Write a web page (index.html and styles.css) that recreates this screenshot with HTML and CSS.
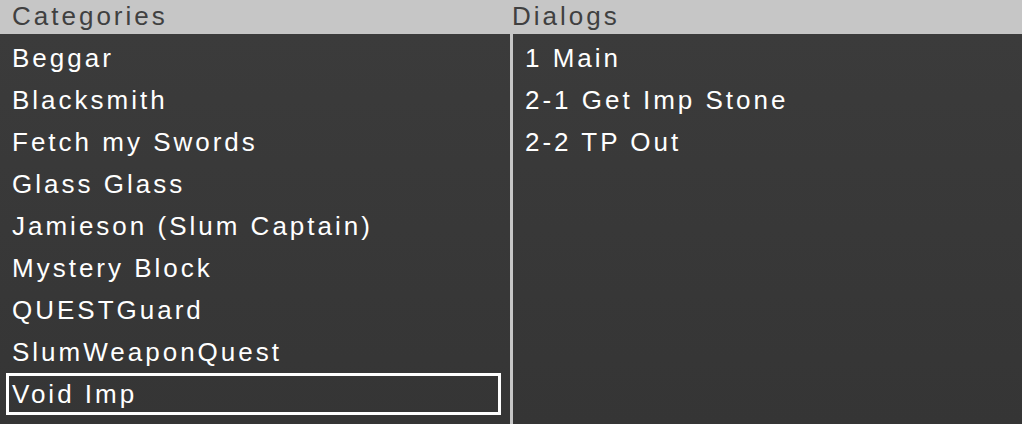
FILE: index.html
```html
<!DOCTYPE html>
<html>
<head>
<meta charset="utf-8">
<link rel="stylesheet" href="styles.css">
</head>
<body>
<div class="screen">
  <div class="header">
    <div class="hcell hcell-left">Categories</div>
    <div class="hcell hcell-right">Dialogs</div>
  </div>
  <div class="body">
    <div class="panel panel-left">
      <div class="row">Beggar</div>
      <div class="row">Blacksmith</div>
      <div class="row">Fetch my Swords</div>
      <div class="row">Glass Glass</div>
      <div class="row">Jamieson (Slum Captain)</div>
      <div class="row">Mystery Block</div>
      <div class="row">QUESTGuard</div>
      <div class="row">SlumWeaponQuest</div>
      <div class="row selected">Void Imp</div>
    </div>
    <div class="divider"></div>
    <div class="panel panel-right">
      <div class="row">1 Main</div>
      <div class="row">2-1 Get Imp Stone</div>
      <div class="row">2-2 TP Out</div>
    </div>
  </div>
</div>
</body>
</html>
```

FILE: styles.css
```css
* { box-sizing: border-box; }
html, body {
  margin: 0;
  padding: 0;
  width: 1022px;
  height: 424px;
  overflow: hidden;
  background: #373737;
}
.screen {
  width: 1022px;
  height: 424px;
  display: flex;
  flex-direction: column;
  font-family: "Liberation Sans", Arial, sans-serif;
  font-size: 26px;
  letter-spacing: 3px;
}
.header {
  height: 34px;
  background: #c6c6c6;
  color: #404040;
  display: flex;
  line-height: 32px;
  padding-bottom: 2px;
}
.hcell-left {
  width: 512px;
  padding-left: 12px;
}
.hcell-right {
  flex: 1;
}
.body {
  flex: 1;
  display: flex;
  background: linear-gradient(#3b3b3b, #353535);
}
.panel {
  padding-top: 3px;
  display: flex;
  flex-direction: column;
}
.panel-left {
  width: 510px;
}
.panel-right {
  flex: 1;
}
.divider {
  width: 3px;
  background: #c6c6c6;
}
.row {
  height: 42px;
  line-height: 42px;
  color: #ffffff;
  white-space: nowrap;
}
.panel-left .row {
  margin-left: 6px;
  width: 495px;
  padding-left: 6px;
}
.panel-right .row {
  padding-left: 12px;
}
.panel-left .row.selected {
  border: 3px solid #ffffff;
  padding-left: 3px;
  line-height: 36px;
}
```
